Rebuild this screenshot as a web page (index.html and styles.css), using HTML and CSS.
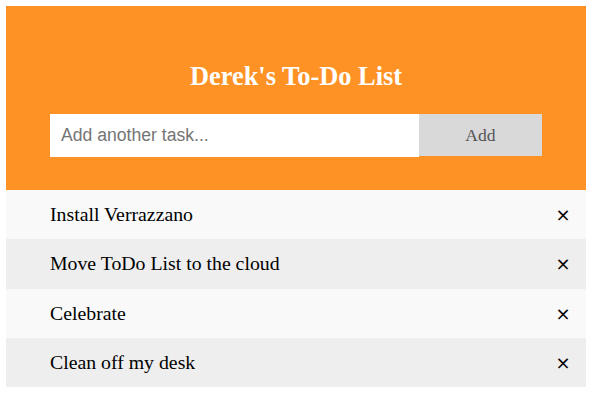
FILE: index.html
```html
<!DOCTYPE html>
<html>
<head>
<meta charset="utf-8">
<link rel="stylesheet" href="styles.css">
</head>
<body>
<div class="app">
  <div class="header">
    <h2 class="title">Derek's To-Do List</h2>
    <div class="form">
      <input class="task-input" type="text" placeholder="Add another task...">
      <span class="add-btn">Add</span>
    </div>
  </div>
  <ul class="list">
    <li class="item">Install Verrazzano<span class="close">×</span></li>
    <li class="item">Move ToDo List to the cloud<span class="close">×</span></li>
    <li class="item">Celebrate<span class="close">×</span></li>
    <li class="item">Clean off my desk<span class="close">×</span></li>
  </ul>
</div>
</body>
</html>
```
FILE: styles.css
```css
html, body {
  margin: 0;
  padding: 0;
  background: #ffffff;
}
body {
  padding: 6px 7px 0 6px;
  font-family: "Liberation Serif", "Times New Roman", serif;
}
.app {
  width: 580px;
}
.header {
  background: #fe9225;
  padding: 33px 44px;
  color: #ffffff;
  text-align: center;
}
.title {
  margin: 22px 0 23px;
  font-size: 26.4px;
  line-height: 30px;
  font-weight: bold;
}
.form {
  display: flex;
  align-items: flex-start;
}
.task-input {
  box-sizing: border-box;
  width: 75%;
  height: 43px;
  margin: 0;
  border: none;
  border-radius: 0;
  padding: 11px;
  font-family: "Liberation Sans", Arial, sans-serif;
  font-size: 17.6px;
  color: #000;
  background: #fff;
  outline: none;
}
.task-input::placeholder {
  color: #757575;
}
.add-btn {
  box-sizing: border-box;
  width: 25%;
  height: 42px;
  padding: 11px;
  background: #d9d9d9;
  color: #555555;
  text-align: center;
  font-size: 17.6px;
  line-height: 20px;
}
.list {
  list-style: none;
  margin: 0;
  padding: 0;
}
.item {
  position: relative;
  padding: 13px 9px 13px 44px;
  font-size: 19.8px;
  line-height: 23.3px;
  color: #000;
  background: #f9f9f9;
}
.item:nth-child(even) {
  background: #eeeeee;
}
.close {
  position: absolute;
  right: 0;
  top: 0;
  padding: 13px 15.5px 13px 17px;
  font-family: "DejaVu Sans", "Liberation Sans", sans-serif;
  font-size: 18px;
  line-height: 23.3px;
}
```
